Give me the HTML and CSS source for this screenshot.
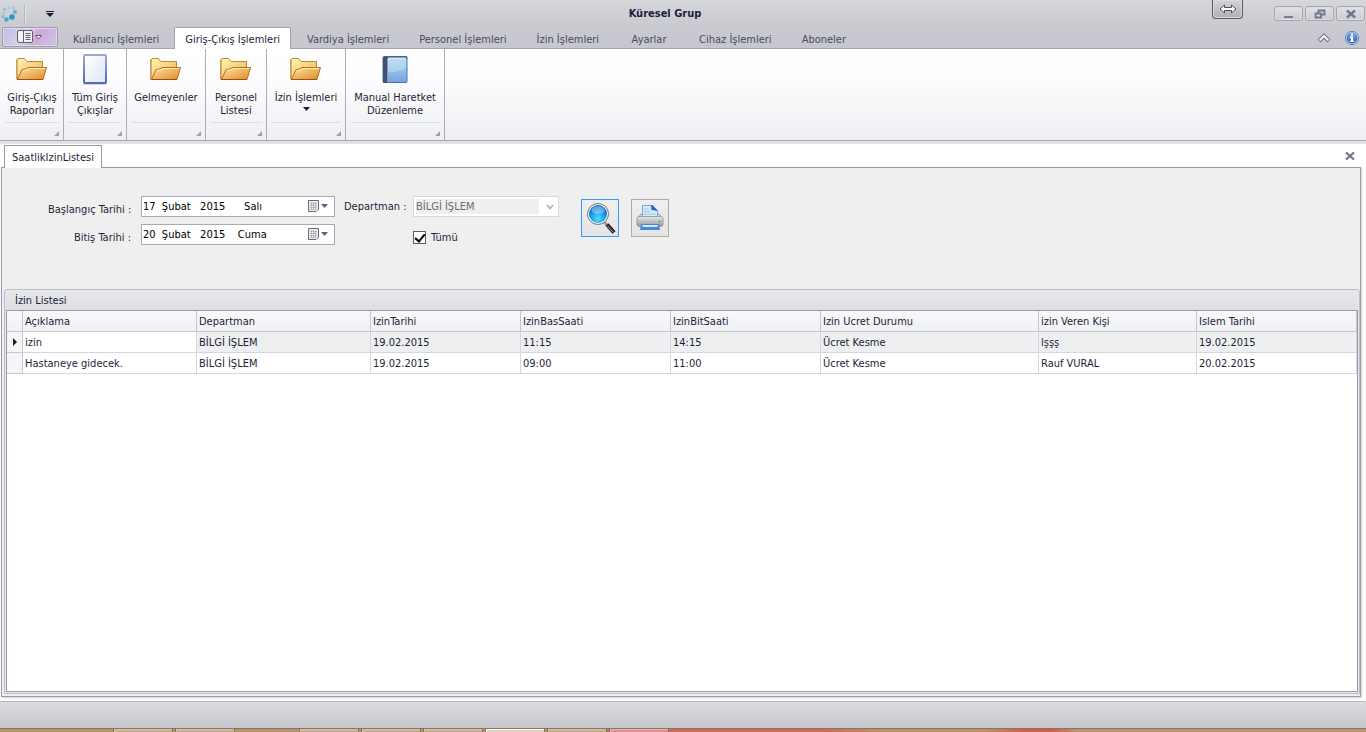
FILE: index.html
```html
<!DOCTYPE html>
<html lang="tr">
<head>
<meta charset="utf-8">
<title>Küresel Grup</title>
<link rel="stylesheet" href="styles.css">
</head>
<body>
<svg class="defs" aria-hidden="true">
  <defs>
    <linearGradient id="folderBack" x1="0" y1="0" x2="1" y2="1"><stop offset="0" stop-color="#fff6b4"/><stop offset="1" stop-color="#eeb04a"/></linearGradient>
    <linearGradient id="folderFront" x1="0" y1="0" x2="1" y2="1"><stop offset="0" stop-color="#ffe6a4"/><stop offset="1" stop-color="#dc8a20"/></linearGradient>
    <linearGradient id="pageFill" x1="0" y1="0" x2="1" y2="1"><stop offset="0" stop-color="#ffffff"/><stop offset="1" stop-color="#dce6f6"/></linearGradient>
    <linearGradient id="pageEdge" x1="0" y1="0" x2="0" y2="1"><stop offset="0" stop-color="#9aaad2"/><stop offset="1" stop-color="#4f6db4"/></linearGradient>
    <linearGradient id="bookFill" x1="0" y1="0" x2="0" y2="1"><stop offset="0" stop-color="#b4dcf0"/><stop offset="1" stop-color="#74a4dc"/></linearGradient>
    <radialGradient id="lens" cx="0.5" cy="0.75" r="0.75"><stop offset="0" stop-color="#58dcff"/><stop offset="0.6" stop-color="#1490ea"/><stop offset="1" stop-color="#0a58b4"/></radialGradient>
    <linearGradient id="printer" x1="0" y1="0" x2="0" y2="1"><stop offset="0" stop-color="#e6e8ea"/><stop offset="1" stop-color="#92969c"/></linearGradient>
    <radialGradient id="infoFill" cx="0.5" cy="0.3" r="0.8"><stop offset="0" stop-color="#7eb2ee"/><stop offset="1" stop-color="#1c50b4"/></radialGradient>
    <symbol id="folder" viewBox="0 0 32 26">
      <path d="M1 22V2.500L2 1.500H8.500L11 4.500H26.500V10" fill="url(#folderBack)" stroke="#c08a38"/>
      <path d="M1 3V23H27V10H9L5 12Z" fill="url(#folderBack)"/>
      <path d="M1 2.500V22.500" stroke="#b87c2c"/>
      <path d="M1.500 22.500L6 12.500L10 12L12 10.500H30.500L27 22.500Z" fill="url(#folderFront)" stroke="#bc6c20"/>
      <path d="M7 13.500L11 13L13 11.500H29" fill="none" stroke="#fff0b8"/>
      <path d="M1 22.500H27" stroke="#a04c18"/>
    </symbol>
  </defs>
</svg>

<header class="titlebar">
  <div class="quick">
    <svg class="logo" width="16" height="18" viewBox="0 0 16 18" aria-hidden="true">
      <circle cx="3.500" cy="4.500" r="1.700" fill="#8ec8d8"/><circle cx="8" cy="2.500" r="1.700" fill="#a8d0dc"/><circle cx="12.500" cy="3" r="1.500" fill="#9cc8d6"/><circle cx="14" cy="7" r="2" fill="#62b4cc"/><circle cx="2.500" cy="8" r="1.500" fill="#a0ccd8"/><circle cx="2" cy="11.500" r="1.700" fill="#7cc0d2"/><circle cx="5.500" cy="14.500" r="2.300" fill="#48a8c4"/><circle cx="11" cy="12" r="2.800" fill="#209cbc"/>
    </svg>
    <span class="quick-line"></span>
    <button class="quick-more" type="button" aria-label="Özelleştir"><svg width="8" height="6" viewBox="0 0 8 6"><path d="M0 0H8V1H0ZM0 2H8L4 6Z" fill="#1c1c34"/></svg></button>
  </div>
  <h1 class="title">Küresel Grup</h1>
  <div class="window-tools">
    <button class="resize-tab" type="button" aria-label="Boyutlandır"><svg width="18" height="10" viewBox="0 0 18 10"><path d="M1 5L5.500 1V3.500H12.500V1L17 5L12.500 9V6.500H5.500V9Z" fill="#fff" stroke="#505054"/></svg></button>
    <button class="win-btn" type="button" aria-label="Simge durumuna küçült"><svg width="12" height="10" viewBox="0 0 12 10"><path d="M1 7H10V9H1Z" fill="#7c7c90"/></svg></button>
    <button class="win-btn" type="button" aria-label="Geri yükle"><svg width="12" height="10" viewBox="0 0 12 10"><path d="M4.500 4V1.500H10.500V5.500H8M1.500 4.500H7V8.500H1.500Z" fill="none" stroke="#74748a" stroke-width="1.800"/></svg></button>
    <button class="win-btn" type="button" aria-label="Kapat"><svg width="12" height="10" viewBox="0 0 12 10"><path d="M2 1.500L10 8.500M10 1.500L2 8.500" stroke="#74748a" stroke-width="2.400"/></svg></button>
  </div>
</header>

<nav class="tabs">
  <button class="app-btn" type="button" aria-label="Menü">
    <svg width="26" height="14" viewBox="0 0 26 14"><rect x="0.500" y="0.500" width="15" height="12" rx="1.500" fill="#f2f2f4" stroke="#606068"/><path d="M6.500 1V13" stroke="#606068"/><path d="M8.500 3.500H13.500M8.500 5.500H13.500M8.500 7.500H13.500M8.500 9.500H13.500" stroke="#606068"/><path d="M18.500 5.500H24.500L21.500 9Z" fill="#fff" stroke="#606068"/></svg>
  </button>
  <button class="tab" type="button">Kullanıcı İşlemleri</button>
  <button class="tab tab-active" type="button">Giriş-Çıkış İşlemleri</button>
  <button class="tab" type="button">Vardiya İşlemleri</button>
  <button class="tab" type="button">Personel İşlemleri</button>
  <button class="tab" type="button">İzin İşlemleri</button>
  <button class="tab" type="button">Ayarlar</button>
  <button class="tab" type="button">Cihaz İşlemleri</button>
  <button class="tab" type="button">Aboneler</button>
  <div class="tab-tools">
    <button class="plain" type="button" aria-label="Şeridi daralt"><svg width="14" height="10" viewBox="0 0 14 10"><path d="M2 8L7 3L12 8" fill="none" stroke="#6c6c74" stroke-width="4"/><path d="M2.500 7.500L7 3L11.500 7.500" fill="none" stroke="#f4f4f6" stroke-width="2"/></svg></button>
    <button class="plain" type="button" aria-label="Bilgi"><svg width="14" height="14" viewBox="0 0 14 14"><circle cx="7" cy="7" r="6.500" fill="#dce8fa" stroke="#5878b8"/><circle cx="7" cy="7" r="5.400" fill="url(#infoFill)"/><path d="M6 2.500H8V4.500H6ZM5 5.500H8V9.500H9V11H5V9.500H6V7H5Z" fill="#fff"/></svg></button>
  </div>
</nav>

<section class="ribbon">
  <div class="group"><button class="tool" type="button"><svg width="32" height="32"><use href="#folder"/></svg><span>Giriş-Çıkış<br>Raporları</span></button><div class="launcher"></div></div>
  <div class="group"><button class="tool" type="button"><svg width="26" height="32" viewBox="0 0 26 32"><rect x="2" y="1" width="22" height="28" rx="1" fill="url(#pageFill)" stroke="url(#pageEdge)" stroke-width="2"/><path d="M1 30.500H25" stroke="#d4d6dc"/></svg><span>Tüm Giriş<br>Çıkışlar</span></button><div class="launcher"></div></div>
  <div class="group group-wide"><button class="tool" type="button"><svg width="32" height="32"><use href="#folder"/></svg><span>Gelmeyenler</span></button><div class="launcher"></div></div>
  <div class="group group-narrow"><button class="tool" type="button"><svg width="32" height="32"><use href="#folder"/></svg><span>Personel<br>Listesi</span></button><div class="launcher"></div></div>
  <div class="group group-wide"><button class="tool" type="button"><svg width="32" height="32"><use href="#folder"/></svg><span>İzin İşlemleri</span><svg class="drop" width="7" height="4" viewBox="0 0 7 4"><path d="M0 0H7L3.500 4Z" fill="#1c1c34"/></svg></button><div class="launcher"></div></div>
  <div class="group group-xwide"><button class="tool" type="button"><svg width="26" height="32" viewBox="0 -2 26 32"><rect x="1" y="0.500" width="24" height="26" rx="1" fill="url(#bookFill)" stroke="#4c74b4"/><path d="M1 2L2 0.500H25V3H5V27H2L1 26Z" fill="#44506e"/><path d="M6 2.500H24" stroke="#d4e8f4" stroke-width="2"/><path d="M6 16Q15 17 24 12V4H6Z" fill="#c4e4f4" opacity="0.500"/><path d="M5.500 4V26" stroke="#8098c0"/></svg><span>Manual Haretket<br>Düzenleme</span></button><div class="launcher"></div></div>
</section>

<main class="workspace">
  <div class="doc-tabs">
    <button class="doc-tab" type="button">SaatlikIzinListesi</button>
    <button class="plain doc-close" type="button" aria-label="Sekmeyi kapat"><svg width="10" height="8" viewBox="0 0 10 8"><path d="M1 0.500L9 7.500M9 0.500L1 7.500" stroke="#74748a" stroke-width="2.200"/></svg></button>
  </div>
  <div class="document">
    <form class="filters">
      <div class="dates">
        <label for="start">Başlangıç Tarihi :</label>
        <div class="date">
          <input id="start" type="text" value="17  Şubat   2015      Salı">
          <button class="plain cal" type="button" aria-label="Takvim"><svg width="21" height="13" viewBox="0 0 21 13"><path d="M0.500 0.500H10.500V9L8 11.500H0.500Z" fill="#eceef4" stroke="#706864"/><path d="M2 3.500H9M2 5.500H9M2 7.500H9M2 9.500H7M3.500 2V10M5.500 2V10M7.500 2V10" stroke="#a4acc0" stroke-width="0.700"/><path d="M13 4H20L16.500 8Z" fill="#4c6490"/></svg></button>
        </div>
        <label for="end">Bitiş Tarihi :</label>
        <div class="date">
          <input id="end" type="text" value="20  Şubat   2015    Cuma">
          <button class="plain cal" type="button" aria-label="Takvim"><svg width="21" height="13" viewBox="0 0 21 13"><path d="M0.500 0.500H10.500V9L8 11.500H0.500Z" fill="#eceef4" stroke="#706864"/><path d="M2 3.500H9M2 5.500H9M2 7.500H9M2 9.500H7M3.500 2V10M5.500 2V10M7.500 2V10" stroke="#a4acc0" stroke-width="0.700"/><path d="M13 4H20L16.500 8Z" fill="#4c6490"/></svg></button>
        </div>
      </div>
      <div class="dept">
        <label for="dept">Departman :</label>
        <div class="select">
          <select id="dept" disabled><option>BİLGİ İŞLEM</option></select>
          <svg width="8" height="6" viewBox="0 0 8 6"><path d="M1 1L4 4.500L7 1" fill="none" stroke="#b4b4b4" stroke-width="1.800"/></svg>
        </div>
        <label class="check"><input type="checkbox" checked><span>Tümü</span></label>
      </div>
      <div class="actions">
        <button class="action action-focus" type="button" aria-label="Ara"><svg width="32" height="34" viewBox="0 0 32 34"><path d="M20 21L23 24" stroke="#9aa0a8" stroke-width="3"/><path d="M23 23.500L30 31.500" stroke="#26262a" stroke-width="4"/><path d="M23.500 25L29 31" stroke="#a8a8ac" stroke-width="1"/><circle cx="14" cy="13" r="10.500" fill="#f4f8fa" stroke="#70767c"/><circle cx="14" cy="13" r="9" fill="url(#lens)"/><ellipse cx="14" cy="9" rx="6.500" ry="4" fill="#fff" opacity="0.350"/></svg></button>
        <button class="action" type="button" aria-label="Yazdır"><svg width="28" height="28" viewBox="0 0 28 28"><path d="M2 14L5 10H23L26 14Z" fill="#d4d8dc" stroke="#9ca0a4"/><path d="M6.500 14V1.500H16L21.500 7V14Z" fill="#d6e8fc" stroke="#7ca4d8"/><path d="M15 1H16.500L22 7L15.500 6Z" fill="#2868bc"/><path d="M8 5H13M8 7.500H14M8 10H20" stroke="#a4c4e8"/><rect x="1" y="12.500" width="26" height="10" rx="2" fill="url(#printer)" stroke="#9ca0a4"/><circle cx="23.500" cy="17.500" r="1" fill="#30c440"/><path d="M5 20H23L24 26H4Z" fill="#4c88cc"/><path d="M6 21H22L21 23H7Z" fill="#d4e6fa"/></svg></button>
      </div>
    </form>

    <section class="list">
      <h2 class="list-title">İzin Listesi</h2>
      <div class="grid-box">
        <table class="grid">
          <colgroup><col class="c-mark"><col class="c-text"><col class="c-text"><col class="c-time"><col class="c-time"><col class="c-time"><col class="c-pay"><col class="c-who"><col></colgroup>
          <thead>
            <tr><th></th><th>Açıklama</th><th>Departman</th><th>IzinTarihi</th><th>IzinBasSaati</th><th>IzinBitSaati</th><th>Izin Ucret Durumu</th><th>izin Veren Kişi</th><th>Islem Tarihi</th></tr>
          </thead>
          <tbody>
            <tr class="current"><td class="mark"><svg width="4" height="8" viewBox="0 0 4 8"><path d="M0 0L4 4L0 8Z" fill="#1c1c34"/></svg></td><td class="focus">izin</td><td>BİLGİ İŞLEM</td><td>19.02.2015</td><td>11:15</td><td>14:15</td><td>Ücret Kesme</td><td>lşşş</td><td>19.02.2015</td></tr>
            <tr><td class="mark"></td><td>Hastaneye gidecek.</td><td>BİLGİ İŞLEM</td><td>19.02.2015</td><td>09:00</td><td>11:00</td><td>Ücret Kesme</td><td>Rauf VURAL</td><td>20.02.2015</td></tr>
          </tbody>
        </table>
      </div>
    </section>
  </div>
</main>

<footer class="status"></footer>
<div class="taskbar">
  <span class="task"></span><span class="task"></span><span class="task-gap"></span><span class="task"></span><span class="task"></span><span class="task"></span><span class="task task-on"></span><span class="task"></span><span class="task task-red"></span>
</div>
</body>
</html>
```
FILE: styles.css
```css
* { box-sizing: border-box; }

body {
  margin: 0;
  min-height: 100vh;
  display: flex;
  flex-direction: column;
  background: #fff;
  color: #1e1e38;
  font: 11px/13px Tahoma, "DejaVu Sans Condensed", "DejaVu Sans", sans-serif;
}

button, input, select { font: inherit; color: inherit; margin: 0; }
button { padding: 0; border: 0; background: none; }
svg { display: block; flex: none; }
.defs { position: absolute; width: 0; height: 0; }
.plain { display: flex; }

/* Title bar */
.titlebar {
  display: grid;
  grid-template-columns: 1fr auto 1fr;
  height: 27px;
  background: linear-gradient(#d6d7db, #c9cad0);
}
.quick { display: flex; align-items: center; padding-left: 1px; }
.quick-line { width: 2px; height: 18px; margin-left: 7px; background: linear-gradient(90deg, #b4b5bc 50%, #e6e6ea 50%); }
.quick-more { display: flex; margin-left: 20px; }
.title { margin: 0; padding-right: 36px; font-size: 11px; line-height: 28px; font-weight: bold; }
.window-tools { display: flex; justify-content: flex-end; gap: 2px; padding: 6px 1px 0 0; }
.resize-tab {
  display: flex; justify-content: center; align-items: center;
  width: 31px; height: 19px; margin: -6px 29px 0 0;
  border: 1px solid #58585c; border-top: 0; border-radius: 0 0 4px 4px;
  background: linear-gradient(#d4d4d8, #aeaeb6);
  box-shadow: inset 0 0 0 1px #dcdce0;
}
.win-btn {
  display: flex; justify-content: center; align-items: center;
  width: 29px; height: 15px;
  border: 1px solid #a4a5ae; border-radius: 3px;
  background: linear-gradient(#e0e1e5, #cbccd2);
  box-shadow: inset 0 0 0 1px #dddee3;
}

/* Ribbon tabs */
.tabs {
  display: flex;
  height: 22px;
  padding-left: 2px;
  background: linear-gradient(#c9cad0, #c6c7ce);
  box-shadow: inset 0 -1px #a2a3ae;
}
.app-btn {
  display: flex; justify-content: center; align-items: center;
  width: 56px; height: 20px;
  border: 1px solid #a09cac; border-radius: 2px;
  background: linear-gradient(120deg, #c0bce4, #d8d0ec 40%, #d0a8d8 60%, #cfc4e8);
  box-shadow: inset 0 0 0 1px #e0d8ee;
}
.tab { min-width: 70px; padding: 2px 15px 0; color: #4a4a5c; white-space: nowrap; }
.tab-active {
  padding: 1px 10px 0; margin-right: 1px;
  color: #1e1e38; background: #fff;
  border: 1px solid #a2a3ae; border-bottom: 0; border-radius: 2px 2px 0 0;
}
.tab-tools { display: flex; align-items: center; gap: 14px; margin-left: auto; padding-right: 7px; }

/* Ribbon */
.ribbon {
  display: flex;
  height: 95px;
  padding-left: 1px;
  border-bottom: 3px solid #e2e3e7;
  background: linear-gradient(#fff, #fdfdfe 30%, #eff0f4 95%);
  box-shadow: inset 0 -1px #a2a3ae;
}
.group {
  display: flex; flex-direction: column; justify-content: space-between;
  width: 63px; height: 91px;
  border-right: 1px solid #acadb6;
}
.group-narrow { width: 61px; }
.group-wide { width: 79px; }
.group-xwide { width: 99px; }
.tool { display: flex; flex-direction: column; align-items: center; padding-top: 5px; white-space: nowrap; }
.tool span { margin-top: 5px; }
.tool .drop { margin-top: 3px; }
.launcher {
  height: 18px; margin: 0 4px;
  border-top: 1px solid #dedfe4;
  background: linear-gradient(315deg, #a0a0a6 3px, transparent 4px) right bottom 4px / 5px 5px no-repeat;
}

/* Open document */
.workspace { flex: 1; display: flex; flex-direction: column; padding: 1px 5px 4px 1px; }
.doc-tabs { display: flex; justify-content: space-between; align-items: flex-start; padding: 0 6px 0 3px; height: 22px; }
.doc-tab {
  position: relative;
  height: 23px; padding: 0 7px;
  border: 1px solid #9a9aaa; border-bottom: 0;
  background: #fff;
}
.doc-close { margin-top: 7px; }
.document {
  flex: 1; display: flex; flex-direction: column;
  padding: 0 0 2px 2px;
  border: 1px solid #9a9aaa;
  background: #efefef;
  box-shadow: 1px 1px 2px #d4d4d8;
}

/* Filters */
.filters { display: flex; align-items: flex-start; height: 121px; padding: 28px 0 0 44px; }
.dates { display: grid; grid-template-columns: 83px 194px; column-gap: 10px; row-gap: 7px; }
.dates label { padding-top: 7px; text-align: right; white-space: nowrap; }
.date { display: flex; align-items: center; height: 21px; padding-right: 5px; border: 1px solid #a8a9b2; background: #fff; color: #000; }
.date input { flex: 1; min-width: 0; padding: 0 1px; border: 0; background: none; }
.dept { display: grid; grid-template-columns: 60px 146px; column-gap: 9px; row-gap: 14px; margin-left: 9px; }
.dept > label:first-child { padding-top: 4px; white-space: nowrap; }
.select { display: flex; align-items: center; height: 21px; padding: 2px 4px 2px 2px; border: 1px solid #d8d8da; background: #fff; }
.select select { flex: 1; height: 15px; margin-right: 7px; padding: 0; border: 0; border-radius: 0; appearance: none; background: #efefef; color: #6c6c6c; opacity: 1; }
.check { grid-column: 2; display: flex; align-items: center; gap: 5px; }
.check input {
  appearance: none; width: 13px; height: 13px; border: 1px solid #5c5c64;
  background: #fff;
  display: grid; place-items: center;
}
.check input:checked::before { content: ""; width: 4px; height: 8px; margin-top: -2px; border: solid #000; border-width: 0 2px 2px 0; transform: rotate(40deg); }
.actions { display: flex; gap: 12px; margin: 3px 0 0 22px; }
.action { display: flex; justify-content: center; align-items: center; width: 38px; height: 38px; border: 1px solid #adadad; background: linear-gradient(#efefef, #e4e4e4); }
.action-focus { border-color: #3399ff; }

/* List */
.list { flex: 1; display: flex; flex-direction: column; padding: 0 1px 1px; border: 1px solid #bcbdc6; border-radius: 3px 3px 0 0; background: #e6e7ea; }
.list-title { margin: 0; padding: 1px 0 0 9px; font-size: 11px; line-height: 19px; font-weight: normal; background: linear-gradient(#e6e7ea, #dedfe3); }
.grid-box { flex: 1; border: 1px solid #9a9aaa; background: #fff; }
.grid { width: 100%; table-layout: fixed; border-collapse: separate; border-spacing: 0; }
.grid th, .grid td { height: 21px; padding: 0 2px; border: solid #d6d6dc; border-width: 0 1px 1px 0; font-weight: normal; text-align: left; white-space: nowrap; }
.grid th { background: linear-gradient(#f8f8fa, #f0f1f4); border-color: #c6c7ce; }
.grid .mark { padding-left: 6px; background: #f4f5f7; border-color: #c6c7ce; }
.current td { background: #edeff1; }
.current .focus { background: #fff; }
.c-mark { width: 16px; }
.c-text { width: 174px; }
.c-time { width: 150px; }
.c-pay { width: 218px; }
.c-who { width: 158px; }

/* Status bar and the desktop edge below it */
.status { height: 27px; border-top: 1px solid #b8b9c0; background: linear-gradient(#dcdde1, #c6c7cc); }
.taskbar {
  display: flex; gap: 2px; height: 4px; padding-left: 113px;
  border-top: 1px solid #8c7458;
  background: linear-gradient(90deg, #b4946c 0 18%, #b8907a 35%, #b8946e 42%, #b8946e 60%, #c86a60 65%, #cc6c60 86%, #b8946e 92%) 0 0 / 960px 100% no-repeat,
    linear-gradient(90deg, #b8946e 0 72%, #cc6050 75% 77%, #b8947a 79%);
}
.task { width: 60px; border: 1px solid #8a6e58; border-width: 0 1px; background: #c8ae98; box-shadow: inset 1px 1px #d8c4b0; }
.task-gap { width: 60px; }
.task-on { background: #e0d0c0; box-shadow: inset 1px 1px #fff; }
.task-red { background: #d89090; }
```
